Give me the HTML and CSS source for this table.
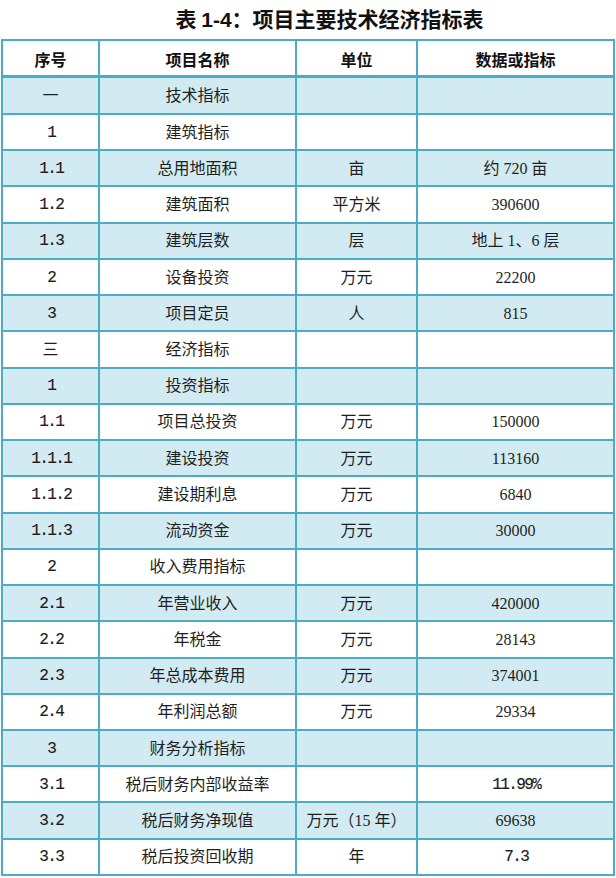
FILE: index.html
```html
<!DOCTYPE html>
<html lang="zh-CN">
<head>
<meta charset="utf-8">
<title>表 1-4：项目主要技术经济指标表</title>
<link rel="stylesheet" href="styles.css">
</head>
<body>
<h1 class="title"><span class="title-text">表 <span class="title-num">1-4</span>：项目主要技术经济指标表</span></h1>
<div class="table">
  <div class="tr head">
    <div class="td">序号</div><div class="td">项目名称</div><div class="td">单位</div><div class="td">数据或指标</div>
  </div>
  <div class="tr band first">
    <div class="td">一</div><div class="td">技术指标</div><div class="td"></div><div class="td"></div>
  </div>
  <div class="tr">
    <div class="td mono">1</div><div class="td">建筑指标</div><div class="td"></div><div class="td"></div>
  </div>
  <div class="tr band">
    <div class="td mono">1.1</div><div class="td">总用地面积</div><div class="td">亩</div><div class="td">约 720 亩</div>
  </div>
  <div class="tr">
    <div class="td mono">1.2</div><div class="td">建筑面积</div><div class="td">平方米</div><div class="td">390600</div>
  </div>
  <div class="tr band">
    <div class="td mono">1.3</div><div class="td">建筑层数</div><div class="td">层</div><div class="td">地上 1、6 层</div>
  </div>
  <div class="tr">
    <div class="td mono">2</div><div class="td">设备投资</div><div class="td">万元</div><div class="td">22200</div>
  </div>
  <div class="tr band">
    <div class="td mono">3</div><div class="td">项目定员</div><div class="td">人</div><div class="td">815</div>
  </div>
  <div class="tr">
    <div class="td">三</div><div class="td">经济指标</div><div class="td"></div><div class="td"></div>
  </div>
  <div class="tr band">
    <div class="td mono">1</div><div class="td">投资指标</div><div class="td"></div><div class="td"></div>
  </div>
  <div class="tr">
    <div class="td mono">1.1</div><div class="td">项目总投资</div><div class="td">万元</div><div class="td">150000</div>
  </div>
  <div class="tr band">
    <div class="td mono">1.1.1</div><div class="td">建设投资</div><div class="td">万元</div><div class="td">113160</div>
  </div>
  <div class="tr">
    <div class="td mono">1.1.2</div><div class="td">建设期利息</div><div class="td">万元</div><div class="td">6840</div>
  </div>
  <div class="tr band">
    <div class="td mono">1.1.3</div><div class="td">流动资金</div><div class="td">万元</div><div class="td">30000</div>
  </div>
  <div class="tr">
    <div class="td mono">2</div><div class="td">收入费用指标</div><div class="td"></div><div class="td"></div>
  </div>
  <div class="tr band">
    <div class="td mono">2.1</div><div class="td">年营业收入</div><div class="td">万元</div><div class="td">420000</div>
  </div>
  <div class="tr">
    <div class="td mono">2.2</div><div class="td">年税金</div><div class="td">万元</div><div class="td">28143</div>
  </div>
  <div class="tr band">
    <div class="td mono">2.3</div><div class="td">年总成本费用</div><div class="td">万元</div><div class="td">374001</div>
  </div>
  <div class="tr">
    <div class="td mono">2.4</div><div class="td">年利润总额</div><div class="td">万元</div><div class="td">29334</div>
  </div>
  <div class="tr band">
    <div class="td mono">3</div><div class="td">财务分析指标</div><div class="td"></div><div class="td"></div>
  </div>
  <div class="tr">
    <div class="td mono">3.1</div><div class="td">税后财务内部收益率</div><div class="td"></div><div class="td mono">11.99%</div>
  </div>
  <div class="tr band">
    <div class="td mono">3.2</div><div class="td">税后财务净现值</div><div class="td">万元（15 年）</div><div class="td">69638</div>
  </div>
  <div class="tr">
    <div class="td mono">3.3</div><div class="td">税后投资回收期</div><div class="td">年</div><div class="td mono">7.3</div>
  </div>
</div>
</body>
</html>
```

FILE: styles.css
```css
html, body {
  margin: 0;
  padding: 0;
  background: #ffffff;
}

body {
  width: 616px;
  font-family: "Liberation Serif", "Noto Sans CJK SC", serif;
  color: #1f1f1f;
}

.title {
  margin: 0;
  height: 38px;
  padding: 0 0 1px 43px;
  display: flex;
  align-items: center;
  justify-content: center;
  font-family: "Noto Sans CJK SC", sans-serif;
  font-size: 21px;
  font-weight: 700;
  color: #111111;
  line-height: 1;
}

.title-text {
  white-space: pre;
}

.title-num {
  font-family: "Liberation Sans", "Noto Sans CJK SC", sans-serif;
}

.table {
  margin-left: 1px;
  width: 614px;
  box-sizing: border-box;
  display: grid;
  grid-template-columns: 97px 197px 121px 197px;
  border-left: 2px solid #4bacc6;
  border-top: 2px solid #4bacc6;
}

.tr {
  display: contents;
}

.td {
  box-sizing: border-box;
  height: 36.24px;
  border-right: 2px solid #4bacc6;
  border-bottom: 2px solid #4bacc6;
  display: flex;
  align-items: center;
  justify-content: center;
  font-size: 16px;
  line-height: 1;
  white-space: nowrap;
  padding-top: 1px;
}

.head .td {
  height: 37px;
  border-bottom-width: 3px;
  font-family: "Noto Sans CJK SC", sans-serif;
  font-weight: 700;
  color: #111111;
}

.first .td {
  height: 37px;
}

.band .td {
  background: #d2eaf1;
}

.mono {
  font-family: "Liberation Mono", "Noto Sans CJK SC", monospace;
  color: #1a1a1a;
  -webkit-text-stroke: 0.15px #1a1a1a;
  letter-spacing: -1.6px;
  text-indent: 1.6px;
}
```
